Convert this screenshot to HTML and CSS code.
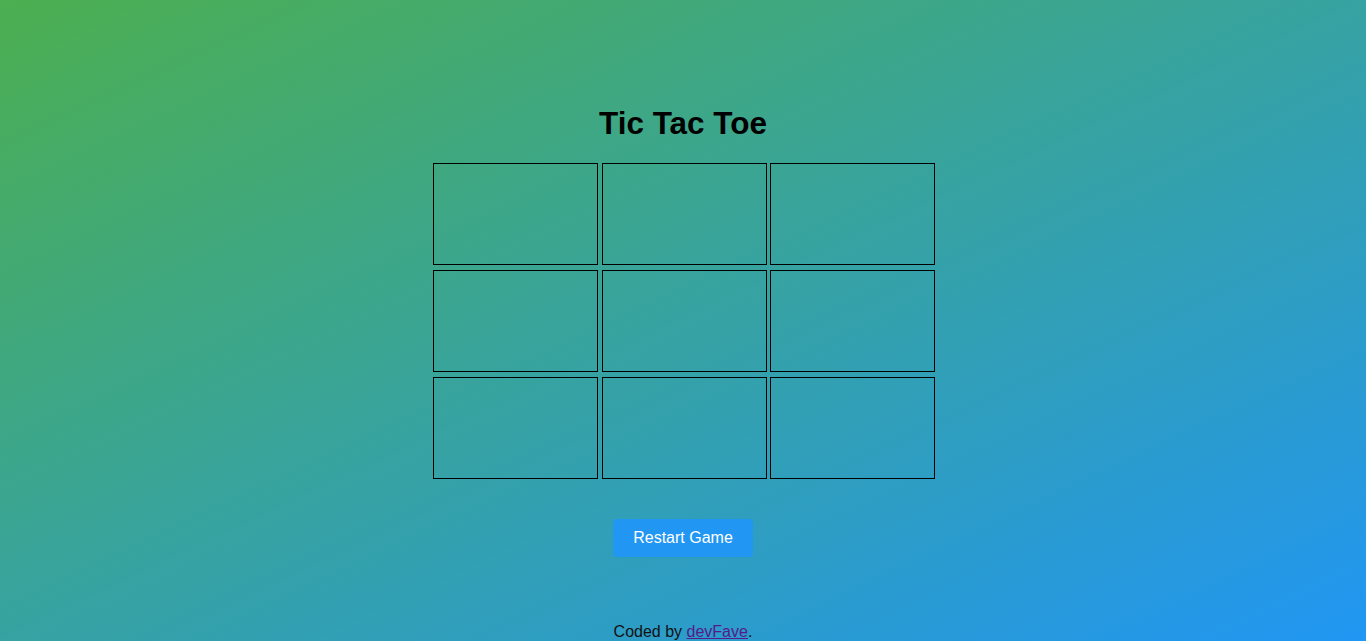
FILE: index.html
```html
<!DOCTYPE html>
<html lang="en">
<head>
<meta charset="utf-8">
<title>Tic Tac Toe</title>
<link rel="stylesheet" href="styles.css">
</head>
<body>
<main class="game">
  <h1 class="title">Tic Tac Toe</h1>
  <div class="board">
    <div class="cell"></div>
    <div class="cell"></div>
    <div class="cell"></div>
    <div class="cell"></div>
    <div class="cell"></div>
    <div class="cell"></div>
    <div class="cell"></div>
    <div class="cell"></div>
    <div class="cell"></div>
  </div>
  <button class="restart" type="button">Restart Game</button>
  <p class="credit">Coded by <a href="#" class="credit-link">devFave</a>.</p>
</main>
</body>
</html>
```

FILE: styles.css
```css
html {
  height: 100%;
  background: linear-gradient(to bottom right, #4caf50, #2196f3);
}

body {
  margin: 0;
  font-family: "Liberation Sans", Arial, sans-serif;
  color: #111;
}

.game {
  display: flex;
  flex-direction: column;
  align-items: center;
  padding-top: 105px;
}

.title {
  margin: 0 0 21px;
  font-size: 31.5px;
  line-height: 37px;
  font-weight: bold;
  color: #000;
}

.board {
  display: grid;
  grid-template-columns: repeat(3, 165px);
  grid-auto-rows: 102px;
  column-gap: 3.5px;
  row-gap: 5px;
  margin-left: 2px;
}

.cell {
  box-sizing: border-box;
  border: 1px solid #000;
}

.restart {
  margin-top: 40px;
  width: 140px;
  height: 38px;
  padding: 0;
  border: none;
  border-radius: 4px;
  background: #2196f3;
  color: #fff;
  font-family: "Liberation Sans", Arial, sans-serif;
  font-size: 16px;
  cursor: pointer;
}

.credit {
  margin: 66px 0 0;
  font-size: 16px;
  line-height: 18px;
  color: #111;
}

.credit-link {
  color: #551a8b;
}
```
